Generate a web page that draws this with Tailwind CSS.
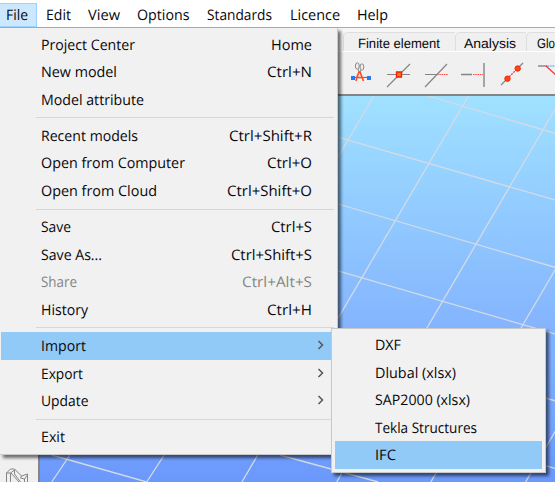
<!DOCTYPE html>
<html lang="en">
<head>
<meta charset="utf-8">
<title>File menu</title>
<script src="https://cdn.jsdelivr.net/npm/@tailwindcss/browser@4"></script>
</head>
<body class="w-[555px] h-[482px] overflow-hidden bg-white font-['Open_Sans','Noto_Sans',sans-serif] text-[14.5px] leading-5 text-[#08080c] [text-rendering:geometricPrecision]">
<div class="relative w-[555px] h-[482px] overflow-hidden flex flex-col">
  <!-- menu bar -->
  <nav class="h-7 shrink-0 flex bg-white border-b border-[#aaa]">
    <div class="mt-[3px] h-[24px] w-[37px] bg-[#cce8ff] border border-l-0 border-[#99d1ff] pl-[6px] leading-[24px]"><span data-w="22">File</span></div>
    <div class="pt-[6px] pl-[9px] w-[42px]"><span data-w="25">Edit</span></div>
    <div class="pt-[6px] pl-[9px] w-[49px]"><span data-w="32">View</span></div>
    <div class="pt-[6px] pl-[9px] w-[70px]"><span data-w="52.5">Options</span></div>
    <div class="pt-[6px] pl-[9px] w-[82px]"><span data-w="65">Standards</span></div>
    <div class="pt-[6px] pl-[10px] w-[68px]"><span data-w="50">Licence</span></div>
    <div class="pt-[6px] pl-[9px]"><span data-w="31">Help</span></div>
  </nav>
  <!-- tool tabs -->
  <div class="h-[24px] shrink-0 flex pl-[343px] pt-1 bg-[#f6f6f6] font-['Liberation_Sans',Arial,sans-serif] text-[13.5px] border-b border-white">
    <div class="w-[112px] shrink-0 bg-[#f0f0f0] border-t border-l border-[#dedede] rounded-tl-[5px] pl-[14px] leading-[21px]"><span data-w="82">Finite element</span></div>
    <div class="w-[71px] shrink-0 bg-[#f0f0f0] border-t border-l border-[#dedede] rounded-tl-[5px] pl-[8px] leading-[21px]"><span data-w="52">Analysis</span></div>
    <div class="w-[29px] shrink-0 bg-[#f0f0f0] border-t border-l border-[#dedede] rounded-tl-[5px] pl-[10px] leading-[21px]"><span data-w="18">Glo</span></div>
  </div>
  <div class="h-[44px] shrink-0 flex pl-[339px] bg-[#f0f0f0] border-b-2 border-[#858585]">
    <svg class="w-[216px] h-[42px] shrink-0" viewBox="339 52 216 42" fill="none">
      <path d="M352 77.5h17" stroke="#777" stroke-width="1.2"/>
      <path d="M351 76h4v4h-4zM367 76h4v4h-4z" fill="#2678ff"/>
      <g stroke="#888"><ellipse cx="357.3" cy="66" rx="1.9" ry="3.2"/><ellipse cx="361.9" cy="67" rx="1.9" ry="3.2"/><path d="M358 69l1.5 4M361 70l-1.5 3"/></g>
      <path d="M356 81l1-4 2-5h1l2 5 1.5 4M357 77.5h5" stroke="#ff4b21" stroke-width="1.6"/>
      <path d="M387 74.5h23M387 87l23-23" stroke="#858585" stroke-width="1.2"/>
      <path d="M396.5 72h5v5h-5z" fill="#ff8000" stroke="#f21c12" stroke-width="1.3"/>
      <path d="M425 74.5h12M425 87l22-23" stroke="#858585" stroke-width="1.2"/>
      <path d="M437 74.5h11" stroke="#f44" stroke-dasharray="1.5 .8"/>
      <path d="M461 74.5h11M484 63v24" stroke="#858585" stroke-width="1.4"/>
      <path d="M473 74.5h10" stroke="#f44" stroke-dasharray="1.5 .8"/>
      <path d="M501 85l7-7M517 69l6-6" stroke="#858585" stroke-width="1.3"/>
      <path d="M507 79l11-11" stroke="#f33" stroke-width="1.3" stroke-dasharray="2 1"/>
      <g fill="#ff4b00" stroke="#f32018"><circle cx="507.5" cy="78.7" r="2.7"/><circle cx="517.7" cy="68.5" r="2.7"/></g>
      <path d="M538 66h9" stroke="#858585" stroke-width="1.4"/><path d="M547 66h9" stroke="#39a4ff" stroke-dasharray="2 .7"/><path d="M546 66l10 9" stroke="#f33" stroke-width="1.3"/>
    </svg>
  </div>
  <!-- workspace -->
  <div class="grow flex bg-[#f0f0f0]">
    <div class="w-[38px] shrink-0 flex items-end">
      <svg class="w-[38px] h-[24px]" viewBox="0 458 38 24" fill="none" stroke="#858585"><path d="M6.5 482v-9l4-4h4l7 7 6-2v8M6.5 473h4l4-3M10.500 473v9M14.500 470v4l6 8M11 473l8 9M21.500 476l-1 2 4 1 3-4M24.500 479v3"/></svg>
    </div>
    <div class="w-[517px] shrink-0 border-l-2 border-[#858585] bg-linear-to-b from-[#a0e1ff] from-0% via-[#84b4fe] via-60% to-[#6b98fb] to-100%">
      <svg class="w-[515px] h-[386px]" viewBox="40 96 515 386" stroke="#d3dbe4" stroke-width="1.3" fill="none">
        <path d="M373.900 96L338 157M468.500 96L241.900 482M562.800 96L336.700 482M657 96L430.800 482M752 96L525.500 482"/>
        <path d="M428 96l127 37.300M338 137.200L555 200M338 204L555 267.300M338 270.800L555 334M338 337.600L555 400.800M338 405L555 468.500M280 455l98 27M51.700 455l95 27M69.900 455L51.700 482M164.200 455L146.700 482"/>
      </svg>
    </div>
  </div>

  <!-- File drop-down -->
  <div class="absolute left-0 top-7 w-[338px] h-[427px] pt-[2.500px] bg-[#f1f1f1] border-r border-b border-[#c9c9c9] shadow-[3px_3px_3px_rgba(0,0,0,.55)]">
    <div class="flex justify-between h-[27.600px] pl-[41px] pr-[25px] leading-[30px]"><span data-w="94">Project Center</span><span data-w="41">Home</span></div>
    <div class="flex justify-between h-[27.600px] pl-[41px] pr-[25px] leading-[30px]"><span data-w="76">New model</span><span data-w="45">Ctrl+N</span></div>
    <div class="h-[27.600px] pl-[41px] leading-[30px]"><span data-w="103">Model attribute</span></div>
    <div class="h-[8.500px] pt-[4px] pl-[36px] pr-[3px]"><div class="h-px bg-[#d7d7d7]"></div></div>
    <div class="flex justify-between h-[27.600px] pl-[41px] pr-[25px] leading-[30px]"><span data-w="97">Recent models</span><span data-w="83">Ctrl+Shift+R</span></div>
    <div class="flex justify-between h-[27.600px] pl-[41px] pr-[25px] leading-[30px]"><span data-w="144">Open from Computer</span><span data-w="45">Ctrl+O</span></div>
    <div class="flex justify-between h-[27.600px] pl-[41px] pr-[25px] leading-[30px]"><span data-w="116">Open from Cloud</span><span data-w="85">Ctrl+Shift+O</span></div>
    <div class="h-[8.500px] pt-[4px] pl-[36px] pr-[3px]"><div class="h-px bg-[#d7d7d7]"></div></div>
    <div class="flex justify-between h-[27.600px] pl-[41px] pr-[25px] leading-[30px]"><span data-w="30">Save</span><span data-w="41">Ctrl+S</span></div>
    <div class="flex justify-between h-[27.600px] pl-[41px] pr-[25px] leading-[30px]"><span data-w="61">Save As...</span><span data-w="81">Ctrl+Shift+S</span></div>
    <div class="flex justify-between h-[27.600px] pl-[41px] pr-[25px] leading-[30px] text-[#858585]"><span data-w="36">Share</span><span data-w="70">Ctrl+Alt+S</span></div>
    <div class="flex justify-between h-[27.600px] pl-[41px] pr-[25px] leading-[30px]"><span data-w="47">History</span><span data-w="45">Ctrl+H</span></div>
    <div class="h-[8.500px] pt-[4px] pl-[36px] pr-[3px]"><div class="h-px bg-[#d7d7d7]"></div></div>
    <div class="flex justify-between h-[27.600px] ml-px pl-[40px] pr-[12px] leading-[30px] bg-[#91c9f7]"><span data-w="45">Import</span><svg class="w-[8px] h-[10px] mt-[8px]" viewBox="0 0 8 10" fill="none" stroke="#555" stroke-width="1.500"><path d="M1.500 1l4 4-4 4"/></svg></div>
    <div class="flex justify-between h-[27.600px] pl-[41px] pr-[12px] leading-[30px]"><span data-w="42">Export</span><svg class="w-[8px] h-[10px] mt-[8px]" viewBox="0 0 8 10" fill="none" stroke="#555" stroke-width="1.500"><path d="M1.500 1l4 4-4 4"/></svg></div>
    <div class="flex justify-between h-[27.600px] pl-[41px] pr-[12px] leading-[30px]"><span data-w="47.500">Update</span><svg class="w-[8px] h-[10px] mt-[8px]" viewBox="0 0 8 10" fill="none" stroke="#555" stroke-width="1.500"><path d="M1.500 1l4 4-4 4"/></svg></div>
    <div class="h-[8.500px] pt-[4px] pl-[36px] pr-[3px]"><div class="h-px bg-[#d7d7d7]"></div></div>
    <div class="h-[27.600px] pl-[41px] leading-[30px]"><span data-w="24">Exit</span></div>
  </div>

  <!-- Import sub-menu -->
  <div class="absolute left-[331px] top-[328px] w-[215px] h-[145px] pt-[2px] px-[3px] bg-[#f1f1f1] border border-[#c9c9c9] shadow-[3px_3px_3px_rgba(0,0,0,.55)]">
    <div class="h-[27.600px] pl-[40px] leading-[29px]"><span data-w="26">DXF</span></div>
    <div class="h-[27.600px] pl-[40px] leading-[29px]"><span data-w="81">Dlubal (xlsx)</span></div>
    <div class="h-[27.600px] pl-[40px] leading-[29px]"><span data-w="95">SAP2000 (xlsx)</span></div>
    <div class="h-[27.600px] pl-[40px] leading-[29px]"><span data-w="102">Tekla Structures</span></div>
    <div class="h-[27.600px] pl-[40px] leading-[29px] bg-[#91c9f7]"><span data-w="21">IFC</span></div>
  </div>
</div>
<script>
  function fit(el) {
    var natural = parseFloat(getComputedStyle(el).width), w = +el.dataset.w;
    el.style.transform = 'scaleX(' + w / natural + ')';
    el.style.marginRight = (w - natural) + 'px';
  }
  var observer = new ResizeObserver(function (entries) {
    entries.forEach(function (entry) { fit(entry.target); });
  });
  document.querySelectorAll('[data-w]').forEach(function (el) {
    el.style.display = 'inline-block';
    el.style.whiteSpace = 'nowrap';
    el.style.flexShrink = '0';
    el.style.transformOrigin = 'left';
    fit(el);
    observer.observe(el);
  });
</script>
</body>
</html>
